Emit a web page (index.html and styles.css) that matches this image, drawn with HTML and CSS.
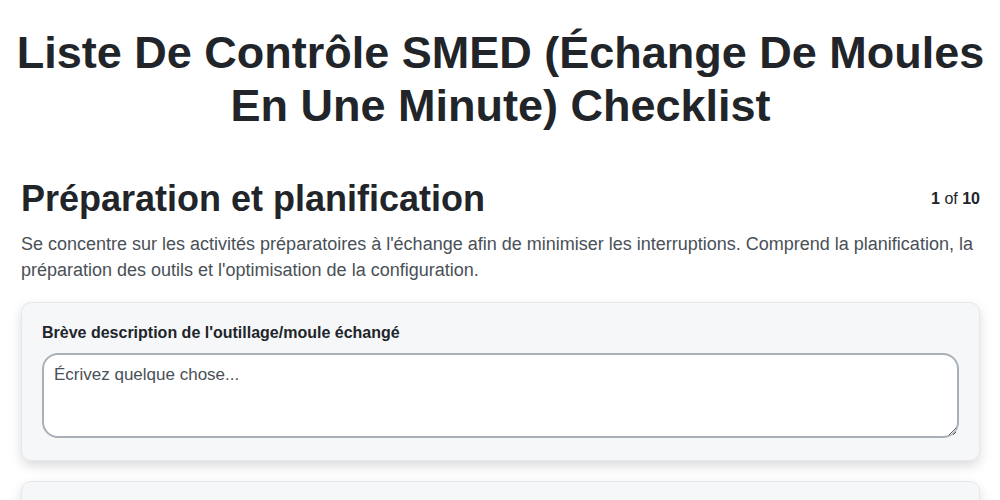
FILE: index.html
```html
<!DOCTYPE html>
<html>
<head>
    <title>Checklist SMED</title>
    <link rel="stylesheet" href="styles.css">
</head>
<body>
    <div class="page">
        <h1 class="title">Liste De Contrôle SMED (Échange De Moules En Une Minute) Checklist</h1>

        <div class="section-head">
            <h2>Préparation et planification</h2>
            <div class="step"><b>1</b> of <b>10</b></div>
        </div>
        <p class="section-desc">Se concentre sur les activités préparatoires à l'échange afin de minimiser les interruptions. Comprend la planification, la préparation des outils et l'optimisation de la configuration.</p>

        <div class="card">
            <label class="field-label" for="desc">Brève description de l'outillage/moule échangé</label>
            <textarea id="desc" placeholder="Écrivez quelque chose..."></textarea>
        </div>

        <div class="card card-next"></div>
    </div>
</body>
</html>
```

FILE: styles.css
```css
* {
    box-sizing: border-box;
    margin: 0;
    padding: 0
}

body {
    background-color: #fff;
    font-family: "Liberation Sans", Arial, sans-serif;
    color: #212529
}

.page {
    padding: 26px 20px 0 21px
}

.title {
    font-size: 45px;
    line-height: 53px;
    text-align: center;
    font-weight: bold;
    margin: 0 -12px 45px -12px
}

.section-head {
    display: flex;
    justify-content: space-between;
    align-items: center
}

.section-head h2 {
    font-size: 36px;
    line-height: 44px;
    font-weight: bold
}

.step {
    font-size: 16px;
    color: #212529
}

.section-desc {
    font-size: 18px;
    line-height: 26px;
    color: #495057;
    margin-top: 10px;
    margin-bottom: 19px
}

.card {
    background-color: #f6f7f9;
    border: 1px solid #e6e8ec;
    border-radius: 10px;
    box-shadow: 0 5px 12px rgba(0, 0, 0, 0.14);
    padding: 20px 20px 22px 20px;
    margin-bottom: 20px
}

.card-next {
    height: 120px
}

.field-label {
    display: block;
    font-size: 16px;
    line-height: 20px;
    font-weight: bold;
    margin-bottom: 10px
}

textarea {
    display: block;
    width: 100%;
    height: 85px;
    border: 2px solid #aab0b8;
    border-radius: 16px;
    padding: 10px 10px;
    font-family: "Liberation Sans", Arial, sans-serif;
    font-size: 17px;
    background-color: #fff;
    color: #212529
}

textarea::placeholder {
    color: #495057
}
```
